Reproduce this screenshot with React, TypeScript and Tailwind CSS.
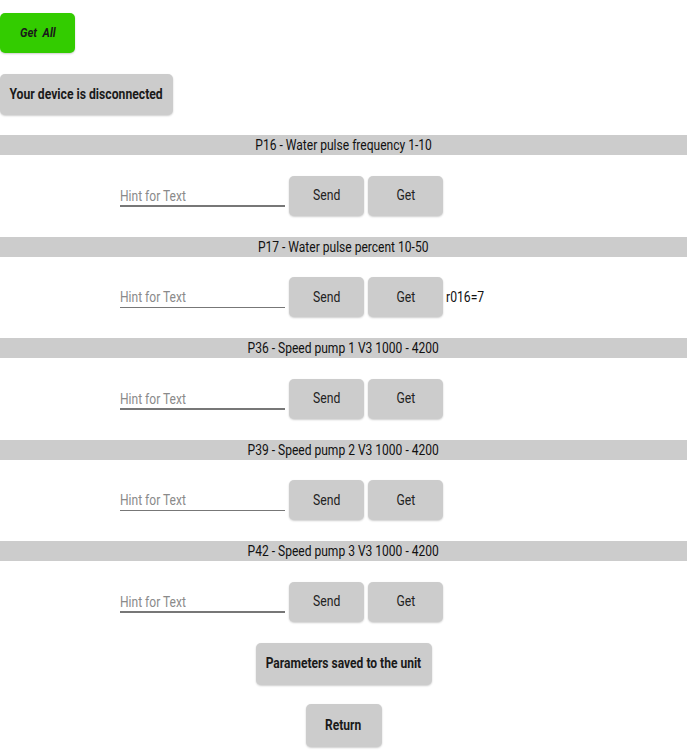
import React from "react";

const sections = [
  { title: "P16 - Water pulse frequency 1-10", result: "" },
  { title: "P17 - Water pulse percent 10-50", result: "r016=7" },
  { title: "P36 - Speed pump 1 V3 1000 - 4200", result: "" },
  { title: "P39 - Speed pump 2 V3 1000 - 4200", result: "" },
  { title: "P42 - Speed pump 3 V3 1000 - 4200", result: "" },
];

function Btn({ children, className }: { children: React.ReactNode; className: string }) {
  return (
    <button
      className={
        "rounded-[5px] bg-[#cccccc] flex items-center justify-center shadow-[0_1px_2px_rgba(0,0,0,0.2)] " +
        className
      }
    >
      {children}
    </button>
  );
}

export default function App() {
  return (
    <div className="w-[687px] h-[750px] bg-white overflow-hidden font-['Roboto',sans-serif] text-[#1a1a1a]">
      <div className="pt-[13px]">
        <button className="w-[75px] h-[40px] rounded-[5px] bg-[#33cc00] flex items-center justify-center shadow-[0_1px_2px_rgba(0,0,0,0.2)]">
          <span className="inline-block whitespace-nowrap text-[12.5px] font-bold italic text-[#1a1a1a] scale-x-[0.9]">
            Get&nbsp;&nbsp;All
          </span>
        </button>
      </div>
      <div className="pt-[21px]">
        <Btn className="w-[173px] h-[41px]">
          <span className="inline-block whitespace-nowrap text-[14px] font-bold scale-x-[0.87]">
            Your device is disconnected
          </span>
        </Btn>
      </div>
      <div className="pt-[20px]">
        {sections.map((s) => (
          <div key={s.title}>
            <div className="h-[20px] bg-[#cccccc] flex items-center justify-center pt-[1px] text-[#111]">
              <span className="inline-block whitespace-nowrap text-[14px] scale-x-[0.86]">{s.title}</span>
            </div>
            <div className="h-[81.5px] flex items-center pl-[120px]">
              <div className="w-[165px] h-[40px] flex flex-col justify-end">
                <div className="leading-none pb-[1.5px]">
                  <span className="inline-block whitespace-nowrap origin-left text-[14px] text-[#8a8a8a] scale-x-[0.86]">
                    Hint for Text
                  </span>
                </div>
                <div className="h-[1.5px] bg-[#777] mb-[9px]" />
              </div>
              <Btn className="ml-[4px] w-[75px] h-[40px]">
                <span className="inline-block text-[14px] text-[#222] scale-x-[0.87]">Send</span>
              </Btn>
              <Btn className="ml-[4px] w-[75px] h-[40px]">
                <span className="inline-block text-[14px] text-[#222] scale-x-[0.87]">Get</span>
              </Btn>
              {s.result && (
                <span className="ml-[3px] inline-block origin-left text-[14px] text-[#111] scale-x-[0.87]">
                  {s.result}
                </span>
              )}
            </div>
          </div>
        ))}
      </div>
      <div className="flex flex-col items-center">
        <Btn className="w-[176px] h-[42px]">
          <span className="inline-block whitespace-nowrap text-[14px] font-bold scale-x-[0.86]">
            Parameters saved to the unit
          </span>
        </Btn>
        <Btn className="mt-[19px] w-[76px] h-[43px]">
          <span className="inline-block text-[14px] font-bold scale-x-[0.86]">Return</span>
        </Btn>
      </div>
    </div>
  );
}
